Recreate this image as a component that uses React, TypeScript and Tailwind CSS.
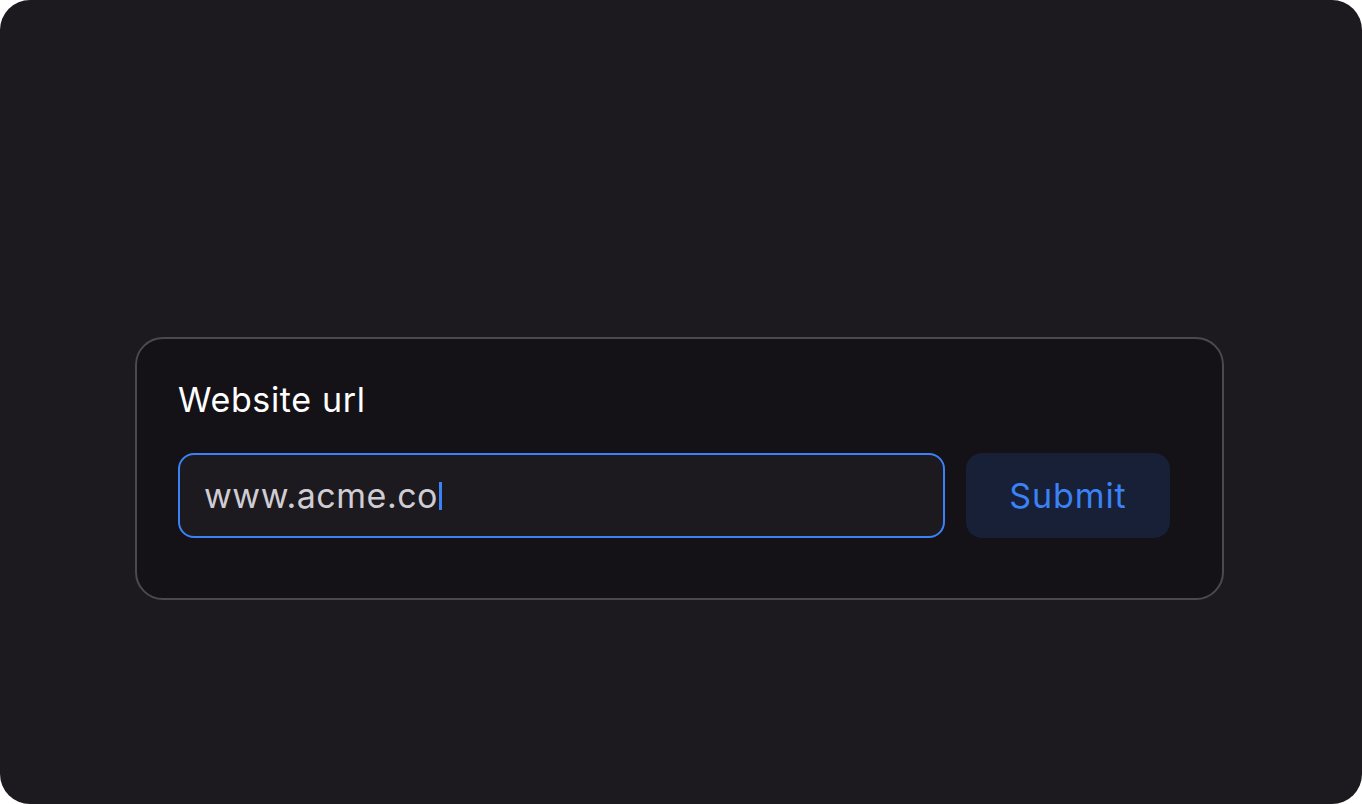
export default function App() {
  return (
    <div className="w-[1362px] h-[804px] bg-white" style={{ fontFamily: "Inter, 'Noto Sans', sans-serif" }}>
      <div className="w-full h-full rounded-[30px] bg-[#1c1a1f] pt-[337px] pl-[135px]">
        <div className="w-[1089px] h-[263px] rounded-[28px] border-2 border-[#4a494e] bg-[#141217] pl-[41px] pt-[41px]">
          <div className="text-[34px] leading-[40px] text-white tracking-[0.65px]">Website url</div>
          <div className="mt-[33px] flex gap-[21px]">
            <div className="w-[767px] h-[85px] rounded-[16px] border-2 border-[#3b82f6] bg-[#1c1a1f] flex items-center pl-[24px]">
              <span className="text-[34px] text-[#cfcdd3] tracking-[0.5px]">www.acme.co</span>
              <span className="ml-[1px] w-[3px] h-[28px] bg-[#3b82f6]" />
            </div>
            <button className="w-[204px] h-[85px] rounded-[16px] bg-[#172036] text-[34px] text-[#3b82f6] tracking-[0.9px]">
              Submit
            </button>
          </div>
        </div>
      </div>
    </div>
  );
}
